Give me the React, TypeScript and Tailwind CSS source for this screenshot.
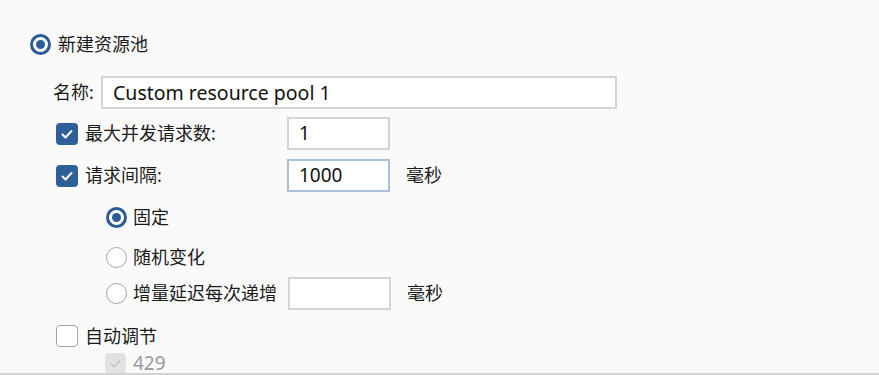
const font = { fontFamily: '"Noto Sans", "Noto Sans CJK SC", sans-serif' };

const Radio = ({ checked }: { checked?: boolean }) =>
  checked ? (
    <span className="flex h-[21px] w-[21px] shrink-0 items-center justify-center rounded-full border-[3px] border-[#2c5c95] bg-white">
      <span className="h-[9px] w-[9px] rounded-full bg-[#2c5c95]" />
    </span>
  ) : (
    <span className="h-[21px] w-[21px] shrink-0 rounded-full border-[1.5px] border-[#a3a3a3] bg-white" />
  );

const Check = ({ checked, disabled }: { checked?: boolean; disabled?: boolean }) => {
  if (disabled)
    return (
      <span className="flex h-[21px] w-[21px] shrink-0 items-center justify-center rounded-[4px] bg-[#e2e2e2]">
        <svg width="13" height="13" viewBox="0 0 14 14" fill="none">
          <path d="M2.5 7.5l3 3 6-6.5" stroke="#c4c4c4" strokeWidth="1.8" strokeLinecap="round" strokeLinejoin="round" />
        </svg>
      </span>
    );
  return checked ? (
    <span className="flex h-[22px] w-[22px] shrink-0 items-center justify-center rounded-[4px] bg-[#2f5f99]">
      <svg width="14" height="14" viewBox="0 0 14 14" fill="none">
        <path d="M2.5 7.5l3 3 6-6.5" stroke="white" strokeWidth="2" strokeLinecap="round" strokeLinejoin="round" />
      </svg>
    </span>
  ) : (
    <span className="h-[22px] w-[22px] shrink-0 rounded-[4px] border-[1.5px] border-[#a3a3a3] bg-white" />
  );
};

const Box = ({ value, focused }: { value?: string; focused?: boolean }) => (
  <div
    className={`flex h-[33px] w-[103px] items-center border-2 bg-white pl-[10px] text-[19px] text-[#111] ${
      focused ? "border-[#a9c1de]" : "border-[#d4d4d4]"
    }`}
  >
    {value}
  </div>
);

export default function App() {
  return (
    <div className="relative h-[375px] w-[879px] overflow-hidden bg-[#fafafa] text-[18px] text-[#1a1a1a]" style={font}>
      <div className="flex flex-col pl-[30px] pt-[34px]">
        <div className="flex h-[21px] items-center gap-[7px]">
          <Radio checked />
          <span>新建资源池</span>
        </div>

        <div className="mt-[21px] flex h-[33px] items-center pl-[23px]">
          <span className="w-[48px]">名称:</span>
          <div className="flex h-[33px] w-[516px] items-center border-2 border-[#d4d4d4] bg-white pl-[10px] text-[19.5px] text-[#111]">
            Custom resource pool 1
          </div>
        </div>

        <div className="mt-[8px] flex h-[33px] items-center pl-[26px]">
          <Check checked />
          <span className="ml-[7px] w-[202px]">最大并发请求数:</span>
          <Box value="1" />
        </div>

        <div className="mt-[9px] flex h-[33px] items-center pl-[26px]">
          <Check checked />
          <span className="ml-[7px] w-[202px]">请求间隔:</span>
          <Box value="1000" focused />
          <span className="ml-[16px]">毫秒</span>
        </div>

        <div className="mt-[15px] flex h-[21px] items-center gap-[6px] pl-[76px]">
          <Radio checked />
          <span>固定</span>
        </div>

        <div className="mt-[19px] flex h-[21px] items-center gap-[6px] pl-[76px]">
          <Radio />
          <span>随机变化</span>
        </div>

        <div className="mt-[9px] flex h-[33px] items-center pl-[76px]">
          <Radio />
          <span className="ml-[6px] w-[155px]">增量延迟每次递增</span>
          <Box />
          <span className="ml-[16px]">毫秒</span>
        </div>

        <div className="mt-[15px] flex h-[22px] items-center gap-[7px] pl-[26px]">
          <Check />
          <span>自动调节</span>
        </div>

        <div className="mt-[6px] flex h-[21px] items-center gap-[7px] pl-[75px] text-[19px] text-[#9a9a9a]">
          <Check disabled />
          <span>429</span>
        </div>
      </div>
      <div className="absolute bottom-0 left-0 h-[2px] w-full bg-[#d2d2d2]" />
    </div>
  );
}
